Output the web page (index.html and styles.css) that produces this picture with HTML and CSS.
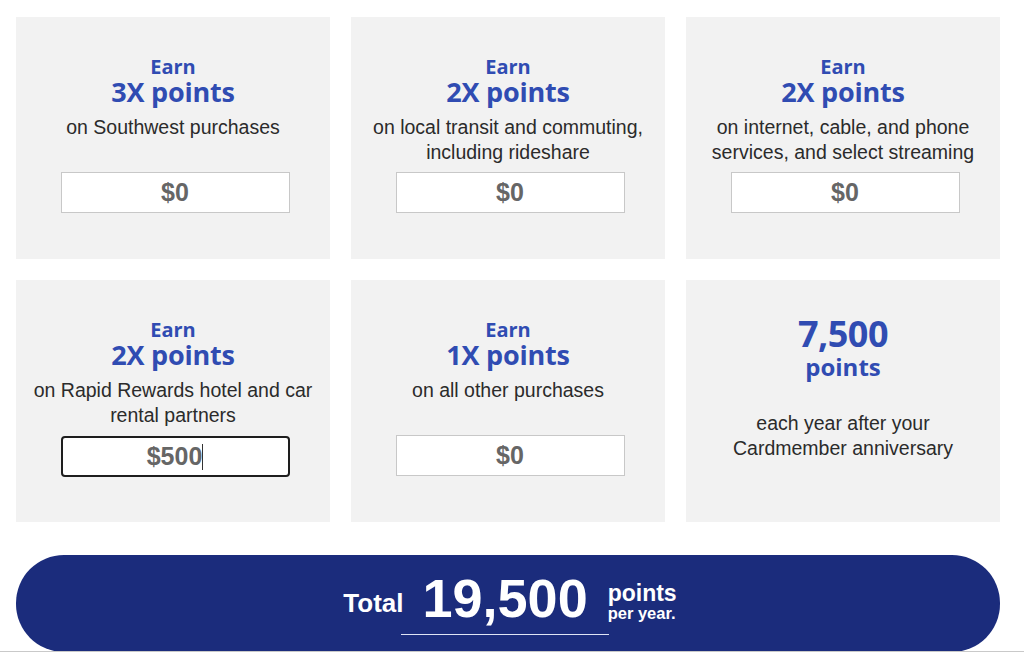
FILE: index.html
```html
<!DOCTYPE html>
<html lang="en">
<head>
<meta charset="utf-8">
<title>Rapid Rewards points calculator</title>
<link rel="stylesheet" href="styles.css">
</head>
<body>
<main class="calc">
  <section class="grid">
    <div class="card">
      <div class="earn">Earn</div>
      <div class="rate">3X points</div>
      <p class="desc">on Southwest purchases</p>
      <div class="amount">$0</div>
    </div>
    <div class="card">
      <div class="earn">Earn</div>
      <div class="rate">2X points</div>
      <p class="desc">on local transit and commuting, including rideshare</p>
      <div class="amount">$0</div>
    </div>
    <div class="card">
      <div class="earn">Earn</div>
      <div class="rate">2X points</div>
      <p class="desc">on internet, cable, and phone services, and select streaming</p>
      <div class="amount">$0</div>
    </div>
    <div class="card">
      <div class="earn">Earn</div>
      <div class="rate">2X points</div>
      <p class="desc">on Rapid Rewards hotel and car rental partners</p>
      <div class="amount focused">$500<span class="caret"></span></div>
    </div>
    <div class="card">
      <div class="earn">Earn</div>
      <div class="rate">1X points</div>
      <p class="desc">on all other purchases</p>
      <div class="amount">$0</div>
    </div>
    <div class="card">
      <div class="bonus">7,500</div>
      <div class="bonus-unit">points</div>
      <p class="desc bonus-desc">each year after your Cardmember anniversary</p>
    </div>
  </section>
  <section class="total">
    <span class="total-label">Total</span>
    <span class="total-value">19,500</span>
    <span class="total-unit"><span class="unit-main">points</span><span class="unit-sub">per year.</span></span>
  </section>
</main>
</body>
</html>
```
FILE: styles.css
```css
html, body {
  margin: 0;
  padding: 0;
  background: #ffffff;
  overflow: hidden;
}
body {
  font-family: "Liberation Sans", Arial, sans-serif;
  height: 653px;
}
.calc {
  padding: 17px 24px 0 16px;
  height: 652px;
  box-sizing: border-box;
  border-bottom: 1px solid #c9c9c9;
  overflow: hidden;
}
.grid {
  display: grid;
  grid-template-columns: repeat(3, 314px);
  grid-auto-rows: 242px;
  column-gap: 21px;
  row-gap: 21px;
}
.card {
  background: #f2f2f2;
  padding-top: 39px;
  display: flex;
  flex-direction: column;
  align-items: center;
  text-align: center;
  box-sizing: border-box;
}
.earn {
  font-family: "Open Sans", sans-serif;
  font-weight: 700;
  font-size: 20px;
  line-height: 22px;
  color: #304cb2;
}
.rate {
  font-family: "Open Sans", sans-serif;
  font-weight: 700;
  font-size: 27px;
  line-height: 28px;
  color: #304cb2;
  letter-spacing: -0.2px;
}
.desc {
  margin: 9px 0 0;
  font-size: 19.5px;
  line-height: 25px;
  color: #2b2b2b;
  min-height: 50px;
  padding: 0 10px;
}
.amount {
  margin-top: 7px;
  margin-left: 4px;
  width: 229px;
  height: 41px;
  box-sizing: border-box;
  background: #ffffff;
  border: 1px solid #c8c8c8;
  font-weight: 700;
  font-size: 25px;
  line-height: 39px;
  color: #666666;
  text-align: center;
}
.amount.focused {
  border: 2px solid #1e1e1e;
  border-radius: 4px;
  line-height: 37px;
  margin-top: 8px;
}
.caret {
  display: inline-block;
  width: 1px;
  height: 26px;
  background: #333;
  vertical-align: -5px;
}
.bonus {
  font-family: "Open Sans", sans-serif;
  font-weight: 700;
  font-size: 36px;
  line-height: 30px;
  color: #304cb2;
  letter-spacing: -0.5px;
}
.bonus-unit {
  font-family: "Open Sans", sans-serif;
  font-weight: 700;
  font-size: 24px;
  line-height: 36px;
  color: #304cb2;
}
.bonus-desc {
  margin-top: 26px;
  max-width: 240px;
}
.total {
  margin-top: 33px;
  height: 97px;
  width: 984px;
  border-radius: 48px;
  background: #1b2c7c;
  color: #ffffff;
  display: flex;
  justify-content: center;
  align-items: flex-start;
  padding-left: 4px;
  box-sizing: border-box;
}
.total-label {
  font-weight: 700;
  font-size: 26px;
  line-height: 30px;
  margin-top: 33px;
  margin-right: -3px;
}
.total-value {
  font-weight: 700;
  font-size: 54px;
  line-height: 62px;
  margin-top: 12px;
  padding: 0 21px 5px 22px;
  border-bottom: 1px solid #dfe4f5;
}
.total-unit {
  display: flex;
  flex-direction: column;
  font-weight: 700;
  margin-top: 27px;
  margin-left: -1px;
}
.unit-main {
  font-size: 23px;
  line-height: 22px;
}
.unit-sub {
  font-size: 16.5px;
  line-height: 19px;
}
```
